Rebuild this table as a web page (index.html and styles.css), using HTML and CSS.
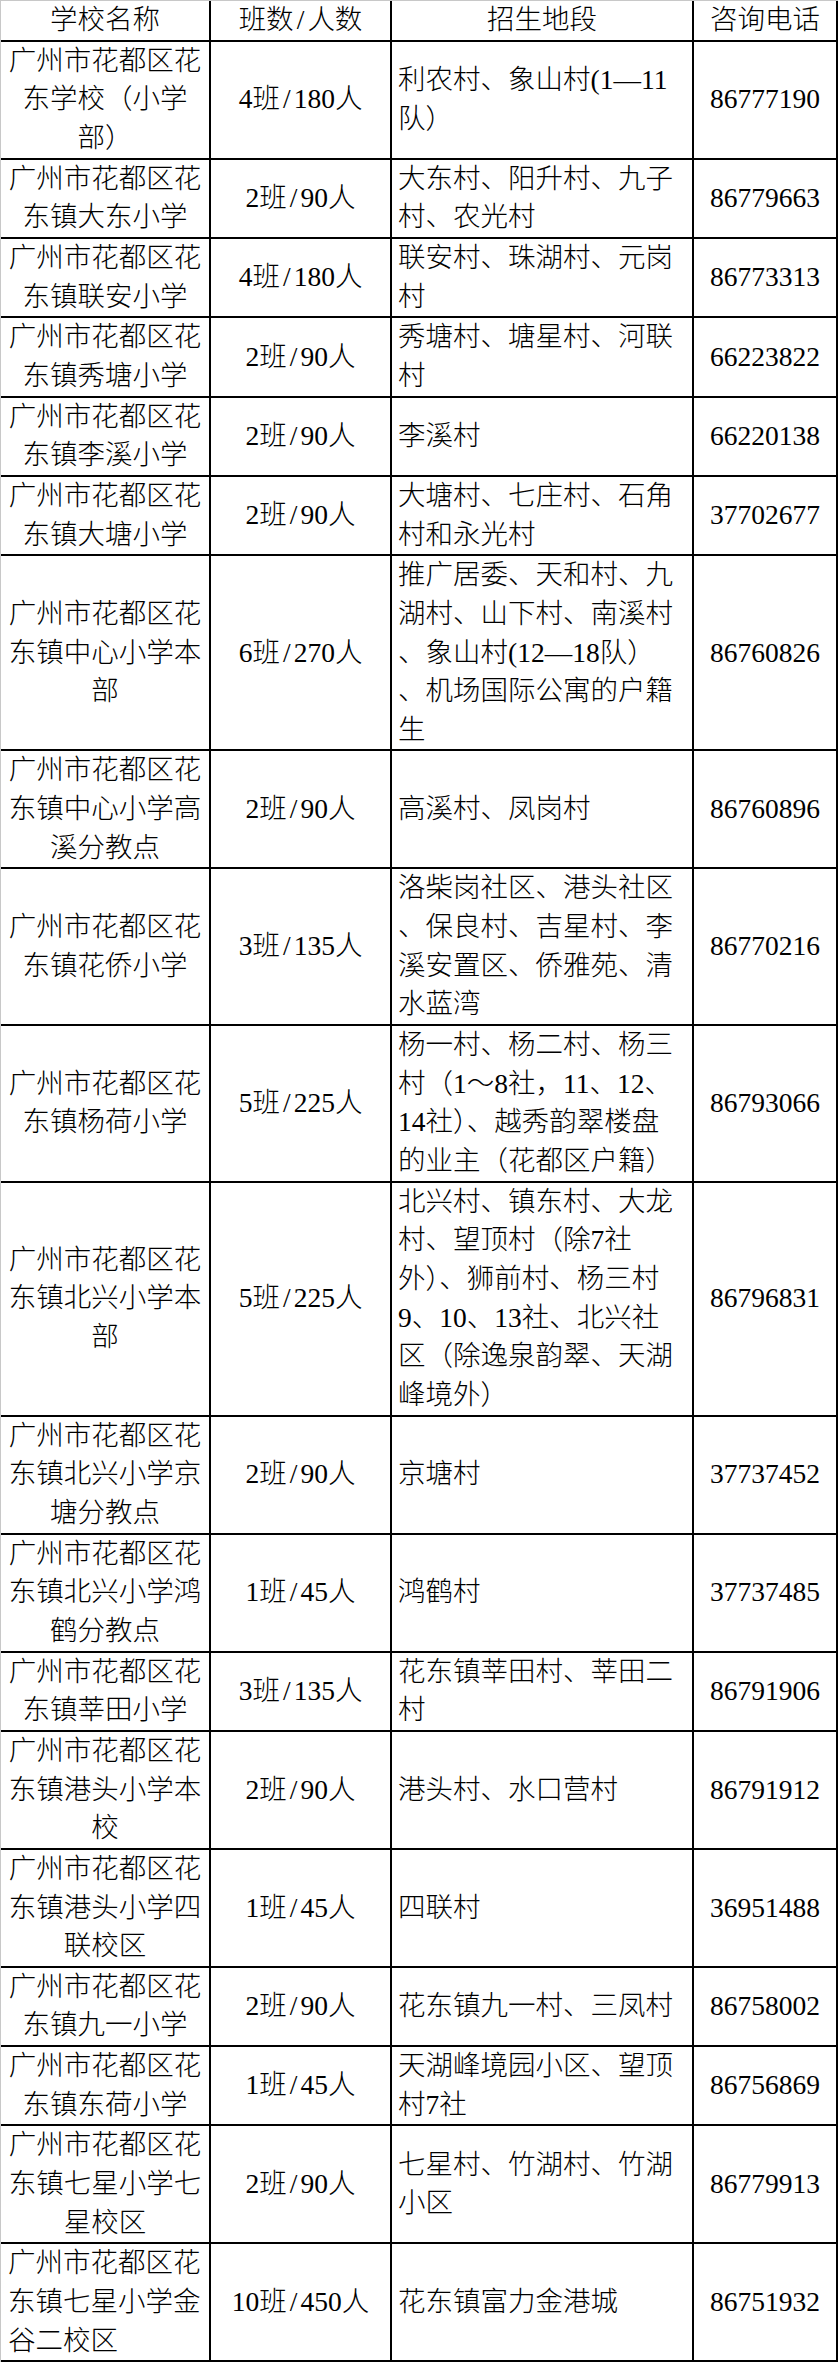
FILE: index.html
```html
<!DOCTYPE html>
<html lang="zh-CN">
<head>
<meta charset="utf-8">
<title>花东镇小学招生地段</title>
<link rel="stylesheet" href="styles.css">
</head>
<body>
<table class="enroll">
  <thead>
    <tr>
      <th class="c-name">学校名称</th>
      <th class="c-cls">班数<span class="sl">/</span>人数</th>
      <th class="c-area">招生地段</th>
      <th class="c-tel">咨询电话</th>
    </tr>
  </thead>
  <tbody>
    <tr>
      <td>广州市花都区花<br>东学校（小学<br>部）</td>
      <td>4班<span class="sl">/</span>180人</td>
      <td class="area">利农村、象山村(1—11<br>队）</td>
      <td>86777190</td>
    </tr>
    <tr>
      <td>广州市花都区花<br>东镇大东小学</td>
      <td>2班<span class="sl">/</span>90人</td>
      <td class="area">大东村、阳升村、九子<br>村、农光村</td>
      <td>86779663</td>
    </tr>
    <tr>
      <td>广州市花都区花<br>东镇联安小学</td>
      <td>4班<span class="sl">/</span>180人</td>
      <td class="area">联安村、珠湖村、元岗<br>村</td>
      <td>86773313</td>
    </tr>
    <tr>
      <td>广州市花都区花<br>东镇秀塘小学</td>
      <td>2班<span class="sl">/</span>90人</td>
      <td class="area">秀塘村、塘星村、河联<br>村</td>
      <td>66223822</td>
    </tr>
    <tr>
      <td>广州市花都区花<br>东镇李溪小学</td>
      <td>2班<span class="sl">/</span>90人</td>
      <td class="area">李溪村</td>
      <td>66220138</td>
    </tr>
    <tr>
      <td>广州市花都区花<br>东镇大塘小学</td>
      <td>2班<span class="sl">/</span>90人</td>
      <td class="area">大塘村、七庄村、石角<br>村和永光村</td>
      <td>37702677</td>
    </tr>
    <tr>
      <td>广州市花都区花<br>东镇中心小学本<br>部</td>
      <td>6班<span class="sl">/</span>270人</td>
      <td class="area">推广居委、天和村、九<br>湖村、山下村、南溪村<br>、象山村(12—18队）<br>、机场国际公寓的户籍<br>生</td>
      <td>86760826</td>
    </tr>
    <tr>
      <td>广州市花都区花<br>东镇中心小学高<br>溪分教点</td>
      <td>2班<span class="sl">/</span>90人</td>
      <td class="area">高溪村、凤岗村</td>
      <td>86760896</td>
    </tr>
    <tr>
      <td>广州市花都区花<br>东镇花侨小学</td>
      <td>3班<span class="sl">/</span>135人</td>
      <td class="area">洛柴岗社区、港头社区<br>、保良村、吉星村、李<br>溪安置区、侨雅苑、清<br>水蓝湾</td>
      <td>86770216</td>
    </tr>
    <tr>
      <td>广州市花都区花<br>东镇杨荷小学</td>
      <td>5班<span class="sl">/</span>225人</td>
      <td class="area">杨一村、杨二村、杨三<br>村（1～8社，11、12、<br>14社）、越秀韵翠楼盘<br>的业主（花都区户籍）</td>
      <td>86793066</td>
    </tr>
    <tr>
      <td>广州市花都区花<br>东镇北兴小学本<br>部</td>
      <td>5班<span class="sl">/</span>225人</td>
      <td class="area">北兴村、镇东村、大龙<br>村、望顶村（除7社<br>外）、狮前村、杨三村<br>9、10、13社、北兴社<br>区（除逸泉韵翠、天湖<br>峰境外）</td>
      <td>86796831</td>
    </tr>
    <tr>
      <td>广州市花都区花<br>东镇北兴小学京<br>塘分教点</td>
      <td>2班<span class="sl">/</span>90人</td>
      <td class="area">京塘村</td>
      <td>37737452</td>
    </tr>
    <tr>
      <td>广州市花都区花<br>东镇北兴小学鸿<br>鹤分教点</td>
      <td>1班<span class="sl">/</span>45人</td>
      <td class="area">鸿鹤村</td>
      <td>37737485</td>
    </tr>
    <tr>
      <td>广州市花都区花<br>东镇莘田小学</td>
      <td>3班<span class="sl">/</span>135人</td>
      <td class="area">花东镇莘田村、莘田二<br>村</td>
      <td>86791906</td>
    </tr>
    <tr>
      <td>广州市花都区花<br>东镇港头小学本<br>校</td>
      <td>2班<span class="sl">/</span>90人</td>
      <td class="area">港头村、水口营村</td>
      <td>86791912</td>
    </tr>
    <tr>
      <td>广州市花都区花<br>东镇港头小学四<br>联校区</td>
      <td>1班<span class="sl">/</span>45人</td>
      <td class="area">四联村</td>
      <td>36951488</td>
    </tr>
    <tr>
      <td>广州市花都区花<br>东镇九一小学</td>
      <td>2班<span class="sl">/</span>90人</td>
      <td class="area">花东镇九一村、三凤村</td>
      <td>86758002</td>
    </tr>
    <tr>
      <td>广州市花都区花<br>东镇东荷小学</td>
      <td>1班<span class="sl">/</span>45人</td>
      <td class="area">天湖峰境园小区、望顶<br>村7社</td>
      <td>86756869</td>
    </tr>
    <tr>
      <td>广州市花都区花<br>东镇七星小学七<br>星校区</td>
      <td>2班<span class="sl">/</span>90人</td>
      <td class="area">七星村、竹湖村、竹湖<br>小区</td>
      <td>86779913</td>
    </tr>
    <tr>
      <td class="left">广州市花都区花<br>东镇七星小学金<br>谷二校区</td>
      <td>10班<span class="sl">/</span>450人</td>
      <td class="area">花东镇富力金港城</td>
      <td>86751932</td>
    </tr>
  </tbody>
</table>
</body>
</html>
```

FILE: styles.css
```css
html, body {
  margin: 0;
  padding: 0;
  background: #ffffff;
}

.enroll {
  border-collapse: separate;
  border-spacing: 0;
  border-top: 1px solid #c8c8c8;
  border-left: 1px solid #c8c8c8;
  font-family: "Liberation Serif", "Noto Sans CJK SC", serif;
  font-size: 27.5px;
  line-height: 38.65px;
  color: #000000;
  table-layout: fixed;
}

.enroll th,
.enroll td {
  box-sizing: border-box;
  border-right: 2px solid #000000;
  border-bottom: 2px solid #000000;
  padding: 0 5px;
  white-space: nowrap;
  vertical-align: middle;
  text-align: center;
  font-weight: 300;
}

.c-name { width: 210px; }
.c-cls { width: 181px; }
.c-area { width: 302px; }
.c-tel { width: 144px; }

.enroll td.area {
  text-align: left;
  padding-left: 6px;
}

.enroll td.left {
  text-align: left;
  padding-left: 7px;
}

.sl {
  display: inline-block;
  width: 0.5em;
  text-align: center;
}
```
